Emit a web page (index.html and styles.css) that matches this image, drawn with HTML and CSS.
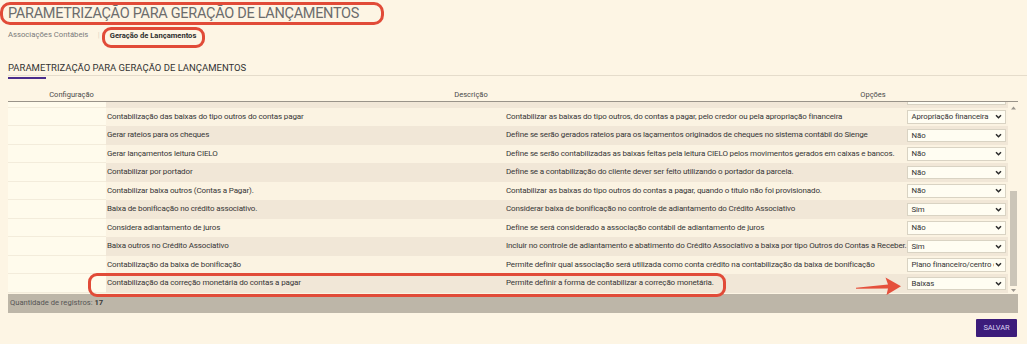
FILE: index.html
```html
<!DOCTYPE html>
<html lang="pt-BR">
<head>
<meta charset="utf-8">
<title>Parametrização para geração de lançamentos</title>
<link rel="stylesheet" href="styles.css">
</head>
<body>
<div class="page">
  <header class="top">
    <h1 class="title"><span class="mark mark-title">PARAMETRIZAÇÃO PARA GERAÇÃO DE LANÇAMENTOS</span></h1>
    <nav class="tabs">
      <span class="tab">Associações Contábeis</span>
      <span class="sep">|</span>
      <span class="mark mark-tab"><span class="tab tab-active">Geração de Lançamentos</span></span>
    </nav>
  </header>

  <section class="panel">
    <h2 class="section-title">PARAMETRIZAÇÃO PARA GERAÇÃO DE LANÇAMENTOS</h2>
    <div class="tabline"><span class="tabline-bar"></span></div>

    <div class="grid-head">
      <div class="hcell hcell-config">Configuração</div>
      <div class="hcell hcell-desc">Descrição</div>
      <div class="hcell hcell-opt">Opções</div>
    </div>

    <div class="grid">
      <div class="grid-body">
        <div class="rows">
          <div class="row row-partial">
            <div class="cell c-config"></div>
            <div class="cell c-name">Contabilização de juros e descontos por agrupamento</div>
            <div class="cell c-desc">Define o agrupamento utilizado para gerar os lançamentos de juros e descontos</div>
            <div class="cell c-opt"><div class="select"><span class="select-text">Por parcela</span><svg class="chev" viewBox="0 0 8 6"><polyline points="1,1.5 4,4.5 7,1.5"/></svg></div></div>
          </div>
          <div class="row">
            <div class="cell c-config"></div>
            <div class="cell c-name">Contabilização das baixas do tipo outros do contas pagar</div>
            <div class="cell c-desc">Contabilizar as baixas do tipo outros, do contas a pagar, pelo credor ou pela apropriação financeira</div>
            <div class="cell c-opt"><div class="select"><span class="select-text">Apropriação financeira</span><svg class="chev" viewBox="0 0 8 6"><polyline points="1,1.5 4,4.5 7,1.5"/></svg></div></div>
          </div>
          <div class="row">
            <div class="cell c-config"></div>
            <div class="cell c-name">Gerar rateios para os cheques</div>
            <div class="cell c-desc">Define se serão gerados rateios para os laçamentos originados de cheques no sistema contábil do Sienge</div>
            <div class="cell c-opt"><div class="select"><span class="select-text">Não</span><svg class="chev" viewBox="0 0 8 6"><polyline points="1,1.5 4,4.5 7,1.5"/></svg></div></div>
          </div>
          <div class="row">
            <div class="cell c-config"></div>
            <div class="cell c-name">Gerar lançamentos leitura CIELO</div>
            <div class="cell c-desc">Define se serão contabilizadas as baixas feitas pela leitura CIELO pelos movimentos gerados em caixas e bancos.</div>
            <div class="cell c-opt"><div class="select"><span class="select-text">Não</span><svg class="chev" viewBox="0 0 8 6"><polyline points="1,1.5 4,4.5 7,1.5"/></svg></div></div>
          </div>
          <div class="row">
            <div class="cell c-config"></div>
            <div class="cell c-name">Contabilizar por portador</div>
            <div class="cell c-desc">Define se a contabilização do cliente dever ser feito utilizando o portador da parcela.</div>
            <div class="cell c-opt"><div class="select"><span class="select-text">Não</span><svg class="chev" viewBox="0 0 8 6"><polyline points="1,1.5 4,4.5 7,1.5"/></svg></div></div>
          </div>
          <div class="row">
            <div class="cell c-config"></div>
            <div class="cell c-name">Contabilizar baixa outros (Contas a Pagar).</div>
            <div class="cell c-desc">Contabilizar as baixas do tipo outros do contas a pagar, quando o título não foi provisionado.</div>
            <div class="cell c-opt"><div class="select"><span class="select-text">Não</span><svg class="chev" viewBox="0 0 8 6"><polyline points="1,1.5 4,4.5 7,1.5"/></svg></div></div>
          </div>
          <div class="row">
            <div class="cell c-config"></div>
            <div class="cell c-name">Baixa de bonificação no crédito associativo.</div>
            <div class="cell c-desc">Considerar baixa de bonificação no controle de adiantamento do Crédito Associativo</div>
            <div class="cell c-opt"><div class="select"><span class="select-text">Sim</span><svg class="chev" viewBox="0 0 8 6"><polyline points="1,1.5 4,4.5 7,1.5"/></svg></div></div>
          </div>
          <div class="row">
            <div class="cell c-config"></div>
            <div class="cell c-name">Considera adiantamento de juros</div>
            <div class="cell c-desc">Define se será considerado a associação contábil de adiantamento de juros</div>
            <div class="cell c-opt"><div class="select"><span class="select-text">Não</span><svg class="chev" viewBox="0 0 8 6"><polyline points="1,1.5 4,4.5 7,1.5"/></svg></div></div>
          </div>
          <div class="row">
            <div class="cell c-config"></div>
            <div class="cell c-name">Baixa outros no Crédito Associativo</div>
            <div class="cell c-desc">Incluir no controle de adiantamento e abatimento do Crédito Associativo a baixa por tipo Outros do Contas a Receber.</div>
            <div class="cell c-opt"><div class="select"><span class="select-text">Sim</span><svg class="chev" viewBox="0 0 8 6"><polyline points="1,1.5 4,4.5 7,1.5"/></svg></div></div>
          </div>
          <div class="row">
            <div class="cell c-config"></div>
            <div class="cell c-name">Contabilização da baixa de bonificação</div>
            <div class="cell c-desc">Permite definir qual associação será utilizada como conta crédito na contabilização da baixa de bonificação</div>
            <div class="cell c-opt"><div class="select"><span class="select-text">Plano financeiro/centro de custo</span><svg class="chev" viewBox="0 0 8 6"><polyline points="1,1.5 4,4.5 7,1.5"/></svg></div></div>
          </div>
          <div class="row">
            <div class="cell c-config"></div>
            <div class="cell c-name">Contabilização da correção monetária do contas a pagar</div>
            <div class="cell c-desc">Permite definir a forma de contabilizar a correção monetária.</div>
            <div class="cell c-opt"><div class="select"><span class="select-text">Baixas</span><svg class="chev" viewBox="0 0 8 6"><polyline points="1,1.5 4,4.5 7,1.5"/></svg></div></div>
          </div>
        </div>
        <div class="scrollbar">
          <svg class="sb-arrow" viewBox="0 0 6 4"><polygon points="0,4 3,0.5 6,4"/></svg>
          <div class="sb-track"><div class="sb-thumb"></div></div>
          <svg class="sb-arrow" viewBox="0 0 6 4"><polygon points="0,0 3,3.5 6,0"/></svg>
        </div>
      </div>
      <div class="grid-footer">Quantidade de registros: <b>17</b></div>

      <div class="annot-box"></div>
      <svg class="annot-arrow" viewBox="0 0 46 20"><polygon points="1,11.8 33,8.6 30.5,1.5 46,10.2 31.5,19 33,12.6 1,12.8"/></svg>
    </div>

    <div class="actions"><button class="btn-save" type="button">SALVAR</button></div>
  </section>
</div>
</body>
</html>
```

FILE: styles.css
```css
* { box-sizing: border-box; }

body {
  margin: 0;
  background: #fdf5e4;
  font-family: Roboto, "Liberation Sans", Arial, sans-serif;
  color: #3a3a3a;
}

.page {
  padding: 0 9px 0 8px;
}

/* ---------- top header ---------- */
.title {
  margin: 0 0 0 -8px;
  padding-top: 1.5px;
  font-size: 14.5px;
  letter-spacing: -0.3px;
  font-weight: 400;
  color: #6c6c6c;
  line-height: 17.5px;
}

.mark {
  display: inline-block;
  border: 3px solid #e14b38;
  border-radius: 10px;
}

.mark-title {
  padding: 0 22px 0 5px;
  height: 23.5px;
}

.tabs {
  display: flex;
  align-items: flex-start;
  height: 22.5px;
  padding-top: 2px;
  font-size: 7.7px;
}

.tab {
  color: #7a7a7a;
  line-height: 10px;
  padding-top: 3px;
}

.sep {
  color: #ddd5c5;
  margin: 0 2px 0 9.5px;
  line-height: 10px;
  padding-top: 3px;
  font-size: 8px;
}

.mark-tab {
  height: 20.7px;
  padding: 0 6px 0 5px;
  border-radius: 9px;
}

.tab-active {
  display: block;
  color: #2e2e2e;
  font-weight: 700;
  font-size: 7.6px;
  padding-top: 0.5px;
}

/* ---------- panel ---------- */
.section-title {
  margin: 14.5px 0 0;
  font-size: 9.5px;
  font-weight: 400;
  line-height: 12px;
  color: #333;
}

.tabline {
  margin-top: 1px;
  margin-right: -9px;
  height: 4px;
  border-top: 1.5px solid #e5dccb;
}

.tabline-bar {
  display: block;
  width: 38px;
  height: 2px;
  margin-top: 0.5px;
  background: #4a2d8c;
}

.grid-head {
  display: flex;
  align-items: flex-end;
  height: 22px;
  font-size: 7.5px;
  line-height: 12px;
  color: #4a4a4a;
}

.hcell { text-align: center; }
.hcell-config { width: 127px; }
.hcell-desc { width: 672px; }
.hcell-opt { width: 132px; }

/* ---------- grid ---------- */
.grid {
  position: relative;
}

.grid-body {
  display: flex;
  border-top: 1.5px solid #999389;
  height: 192.7px;
}

.rows {
  width: 1000px;
  overflow: hidden;
  height: 191.2px;
}

.row {
  display: flex;
  height: 18.5px;
  font-size: 8px;
  letter-spacing: -0.14px;
  line-height: 18.5px;
  color: #363636;
  white-space: nowrap;
}

.row-partial {
  margin-top: -12.8px;
}

.row:nth-child(odd) { background: #f1e7d7; }
.row:nth-child(even) { background: #fbf3e2; }

.cell {
  overflow: hidden;
}

.c-config {
  width: 98px;
  background: #fffbec;
  border-bottom: 1px solid #f3ecdb;
}

.c-name {
  width: 399px;
  padding-left: 1px;
}

.c-desc {
  width: 400px;
  padding-left: 1px;
  overflow: visible;
}

.c-opt {
  position: relative;
  width: 103px;
  padding: 2.5px 2px 0 2px;
}

.select {
  display: flex;
  align-items: center;
  height: 13.5px;
  width: 99px;
  background: #fffdf2;
  border: 1px solid #d9d3c3;
  overflow: hidden;
}

.select-text {
  flex: 1;
  min-width: 0;
  overflow: hidden;
  padding-left: 3.5px;
  line-height: 11px;
  font-size: 7.8px;
  letter-spacing: -0.08px;
  color: #333;
}

.chev {
  flex: none;
  width: 7px;
  height: 5px;
  margin: 0 3px 0 1px;
  fill: none;
  stroke: #2a2a2a;
  stroke-width: 1.8;
}

/* ---------- scrollbar ---------- */
.scrollbar {
  width: 10px;
  display: flex;
  flex-direction: column;
  align-items: center;
  padding: 4px 0 1px;
}

.sb-arrow {
  width: 5px;
  height: 3.5px;
  fill: #9a958d;
  flex: none;
}

.sb-track {
  flex: 1;
  width: 100%;
  padding: 81px 1.5px 3px;
}

.sb-thumb {
  height: 100%;
  background: #cbc5b8;
}

/* ---------- footer ---------- */
.grid-footer {
  height: 18.5px;
  margin-top: 0.5px;
  background: #bdb6a8;
  font-size: 7.6px;
  line-height: 18px;
  padding-left: 2px;
  color: #555;
}

.grid-footer b {
  color: #3a3a3a;
  font-weight: 700;
}

/* ---------- annotations over content ---------- */
.annot-box {
  position: absolute;
  left: 80px;
  top: 172px;
  width: 638px;
  height: 24px;
  border: 3px solid #e14b38;
  border-radius: 9px;
}

.annot-arrow {
  position: absolute;
  left: 847px;
  top: 175px;
  width: 46px;
  height: 20px;
  fill: #e5503c;
}

/* ---------- actions ---------- */
.actions {
  display: flex;
  justify-content: flex-end;
  padding-top: 6px;
  padding-right: 1px;
}

.btn-save {
  width: 41px;
  height: 18px;
  padding: 0;
  border: none;
  border-radius: 1px;
  background: #3c1c7a;
  color: #d9d1f0;
  font-family: Roboto, "Liberation Sans", Arial, sans-serif;
  font-size: 7.5px;
  letter-spacing: -0.1px;
}
```
